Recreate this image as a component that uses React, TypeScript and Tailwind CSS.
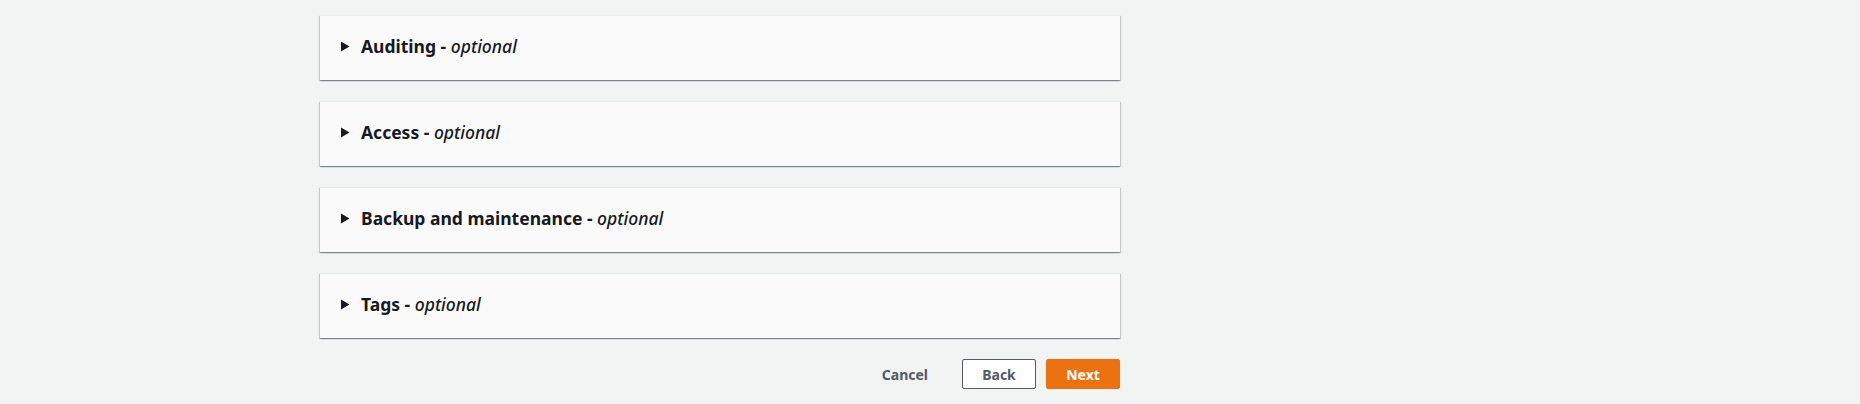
import React from 'react';

const sections = ['Auditing', 'Access', 'Backup and maintenance', 'Tags'];

function Caret() {
  return (
    <svg width="10" height="11" viewBox="0 0 10 11" className="shrink-0">
      <path d="M1 0.5 L9.5 5.5 L1 10.5 Z" fill="#16191f" />
    </svg>
  );
}

export default function App() {
  return (
    <div
      className="min-h-[404px] w-full bg-[#f2f3f3] pl-[320px] pt-[15px]"
      style={{ fontFamily: '"Noto Sans", "Open Sans", Arial, sans-serif' }}
    >
      <div className="flex w-[800px] flex-col gap-[21px]">
        {sections.map((s) => (
          <div
            key={s}
            className="flex h-[65px] items-center gap-[11px] border-t border-[#eaeded] bg-[#fafafa] pb-[3px] pl-[20px] shadow-[0_1px_1px_0_rgba(0,28,36,0.3),1px_1px_1px_0_rgba(0,28,36,0.15),-1px_1px_1px_0_rgba(0,28,36,0.15)]"
          >
            <Caret />
            <span className="text-[17.5px] font-bold text-[#16191f]">
              {s} - <i className="font-medium">optional</i>
            </span>
          </div>
        ))}
      </div>
      <div className="mt-[21px] flex w-[800px] items-center justify-end gap-[10px]">
        <button className="px-[24px] text-[14px] font-bold text-[#545b64]">Cancel</button>
        <button className="h-[30px] w-[74px] rounded-[2px] border border-[#545b64] bg-white text-[14px] font-bold text-[#545b64]">
          Back
        </button>
        <button className="h-[30px] w-[74px] rounded-[2px] border border-[#ec7211] bg-[#ec7211] text-[14px] font-bold text-white">
          Next
        </button>
      </div>
    </div>
  );
}
